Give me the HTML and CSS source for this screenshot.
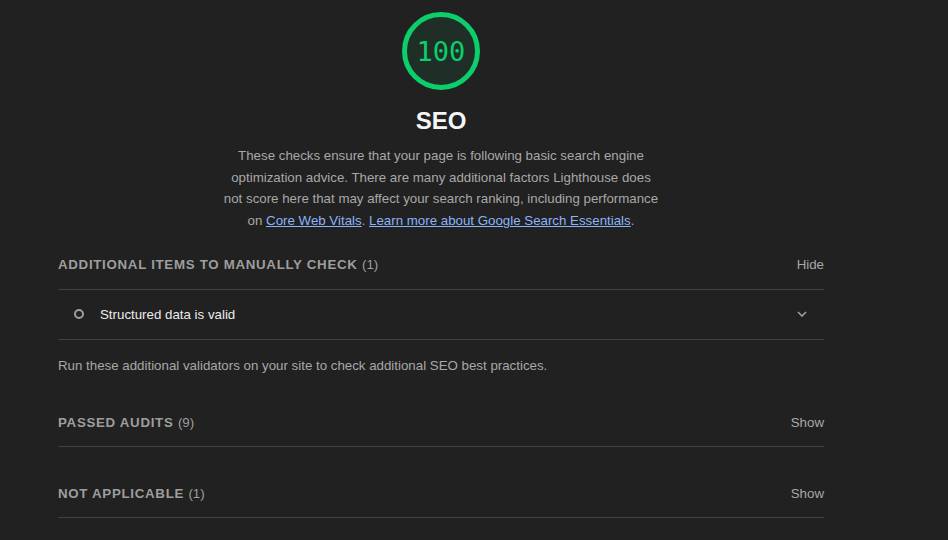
FILE: index.html
```html
<!DOCTYPE html>
<html lang="en">
<head>
<meta charset="utf-8">
<title>SEO</title>
<link rel="stylesheet" href="styles.css">
</head>
<body>
<div class="report">
  <div class="category-header">
    <div class="gauge">
      <svg class="gauge-svg" viewBox="0 0 80 80" width="80" height="80">
        <circle cx="40" cy="40" r="36.5" class="gauge-base"/>
      </svg>
      <span class="gauge-value">100</span>
    </div>
    <h1 class="category-title">SEO</h1>
    <p class="category-desc">These checks ensure that your page is following basic search engine optimization advice. There are many additional factors Lighthouse does not score here that may affect your search ranking, including performance on <a href="#">Core Web Vitals</a>. <a href="#">Learn more about Google Search Essentials</a>.</p>
  </div>

  <div class="group group-manual">
    <div class="group-header">
      <span class="group-title">Additional items to manually check <span class="count">(1)</span></span>
      <span class="toggle">Hide</span>
    </div>
    <div class="audit">
      <span class="audit-icon"></span>
      <span class="audit-title">Structured data is valid</span>
      <svg class="chevron" width="10" height="6" viewBox="0 0 10 6"><path d="M1 1 L5 5 L9 1" fill="none" stroke="#9e9e9e" stroke-width="1.6"/></svg>
    </div>
    <p class="group-desc">Run these additional validators on your site to check additional SEO best practices.</p>
  </div>

  <div class="group group-collapsed">
    <div class="group-header">
      <span class="group-title">Passed audits <span class="count">(9)</span></span>
      <span class="toggle">Show</span>
    </div>
  </div>

  <div class="group group-collapsed group-last">
    <div class="group-header">
      <span class="group-title">Not applicable <span class="count">(1)</span></span>
      <span class="toggle">Show</span>
    </div>
  </div>
</div>
</body>
</html>
```

FILE: styles.css
```css
html, body {
  margin: 0;
  padding: 0;
  background: #212121;
  font-family: "Liberation Sans", Arial, sans-serif;
  color: #aaaaaa;
  font-size: 13.3px;
}

.report {
  width: 766px;
  margin-left: 58px;
}

.category-header {
  display: flex;
  flex-direction: column;
  align-items: center;
  padding-top: 11px;
}

.gauge {
  position: relative;
  width: 80px;
  height: 80px;
}

.gauge-base {
  fill: rgba(12, 206, 107, 0.08);
  stroke: #0cce6b;
  stroke-width: 5;
}

.gauge-value {
  position: absolute;
  inset: 0;
  display: flex;
  align-items: center;
  justify-content: center;
  font-family: "DejaVu Sans Mono", "Liberation Mono", monospace;
  font-size: 27px;
  color: #0cce6b;
}

.category-title {
  margin: 16px 0 0;
  font-size: 24px;
  line-height: 28px;
  font-weight: bold;
  color: #f5f5f5;
}

.category-desc {
  margin: 10px 0 0;
  max-width: 440px;
  text-align: center;
  line-height: 21.7px;
  color: #a8a8a8;
}

.category-desc a {
  color: #8ab4f8;
  text-decoration: underline;
}

.group-header {
  display: flex;
  justify-content: space-between;
  align-items: center;
  line-height: 20px;
  padding: 0 0 14px;
  border-bottom: 1px solid #424242;
}

.group-manual .group-header {
  margin-top: 23px;
}

.group-title {
  text-transform: uppercase;
  font-weight: bold;
  letter-spacing: 0.7px;
  color: #9e9e9e;
}

.count {
  font-weight: normal;
  letter-spacing: 0;
}

.toggle {
  color: #a8a8a8;
}

.audit {
  display: flex;
  align-items: center;
  height: 49px;
  padding: 0 17px 0 16px;
  border-bottom: 1px solid #424242;
}

.audit-icon {
  width: 6px;
  height: 6px;
  border: 2px solid #9e9e9e;
  border-radius: 50%;
  margin-right: 16px;
}

.audit-title {
  flex: 1;
  color: #ececec;
}

.group-desc {
  margin: 16px 0 0;
  line-height: 20px;
  color: #a8a8a8;
}

.group-collapsed .group-header {
  margin-top: 37px;
  padding-bottom: 13px;
}

.group-last .group-header {
  margin-top: 37px;
}
```
